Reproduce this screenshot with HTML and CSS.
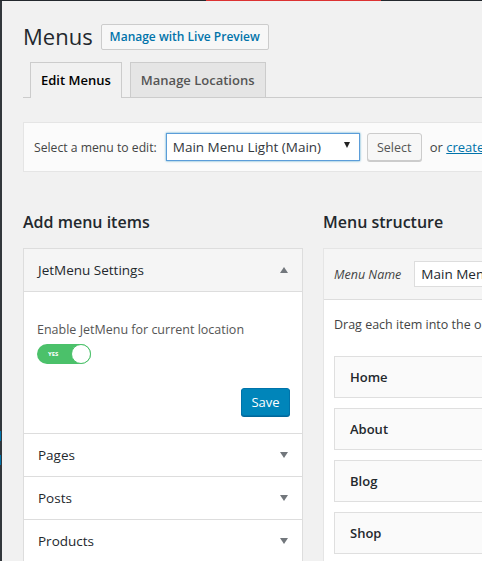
FILE: index.html
```html
<html>
<head>
    <meta charset="UTF-8">
    <title>Menus</title>
    <link rel="stylesheet" href="styles.css">
</head>
<body>
<div class="topbar"><span class="topbar-red"></span></div>
<div class="shell">
    <div class="sidebar">
        <span class="side-mark first"></span>
        <span class="side-mark"></span>
    </div>
    <div class="wrap">
        <div class="title-row">
            <h1>Menus</h1>
            <a class="page-title-action">Manage with Live Preview</a>
        </div>

        <div class="nav-tabs">
            <a class="nav-tab active">Edit Menus</a>
            <a class="nav-tab">Manage Locations</a>
        </div>

        <div class="manage-menus">
            <label>Select a menu to edit:</label>
            <div class="select-box">
                <span>Main Menu Light (Main)</span>
                <span class="caret"></span>
            </div>
            <button class="button">Select</button>
            <span class="or-text">or <a class="link">create a new menu</a>.</span>
        </div>

        <div class="columns">
            <div class="col-left">
                <h3>Add menu items</h3>
                <div class="accordion">
                    <div class="acc-title open">
                        JetMenu Settings
                        <span class="arrow up"></span>
                    </div>
                    <div class="acc-body">
                        <div class="opt-label">Enable JetMenu for current location</div>
                        <div class="toggle">
                            <span class="toggle-text">YES</span>
                            <span class="toggle-knob"></span>
                        </div>
                        <div class="save-row">
                            <button class="button-primary">Save</button>
                        </div>
                    </div>
                    <div class="acc-title">Pages <span class="arrow"></span></div>
                    <div class="acc-title">Posts <span class="arrow"></span></div>
                    <div class="acc-title">Products <span class="arrow"></span></div>
                </div>
            </div>

            <div class="col-right">
                <h3>Menu structure</h3>
                <div class="menu-edit">
                    <div class="menu-header">
                        <em class="menu-name-label">Menu Name</em>
                        <div class="menu-name-input">Main Menu Light</div>
                    </div>
                    <div class="menu-body">
                        <p class="drag-hint">Drag each item into the order you prefer.</p>
                        <div class="menu-item">Home</div>
                        <div class="menu-item">About</div>
                        <div class="menu-item">Blog</div>
                        <div class="menu-item">Shop</div>
                    </div>
                </div>
            </div>
        </div>
    </div>
</div>
</body>
</html>
```

FILE: styles.css
```css
body {
    margin: 0;
    padding: 0;
    background-color: #f1f1f1;
    font-family: "Open Sans", "Noto Sans", sans-serif;
    color: #23282d;
    overflow: hidden;
    width: 482px;
    height: 561px;
}

.topbar {
    height: 1px;
    background-color: #23282d;
    display: flex;
}

.topbar-red {
    margin-left: 206px;
    width: 175px;
    background-color: #dc3232;
}

.shell {
    display: flex;
}

.sidebar {
    width: 2px;
    flex-shrink: 0;
    background-color: #32373c;
    height: 560px;
    display: flex;
    flex-direction: column;
}

.side-mark {
    width: 1px;
    height: 10px;
    background-color: #0073aa;
    margin-top: 14px;
}

.side-mark.first {
    margin-top: 430px;
}

.wrap {
    width: 900px;
    flex-shrink: 0;
    padding-left: 21px;
}

/* heading */
.title-row {
    display: flex;
    align-items: center;
    margin-top: 22px;
    height: 27px;
}

h1 {
    font-size: 22px;
    font-weight: 400;
    margin: 0 8px 0 0;
    line-height: 29px;
}

.page-title-action {
    border: 1px solid #ccc;
    background-color: #f7f7f7;
    color: #0073aa;
    font-size: 12px;
    font-weight: 600;
    padding: 0 8px;
    height: 24px;
    line-height: 24px;
    border-radius: 2px;
}

/* tabs */
.nav-tabs {
    display: flex;
    margin-top: 12px;
    border-bottom: 1px solid #ccc;
    height: 35px;
    align-items: flex-end;
}

.nav-tab {
    margin-left: 7px;
    border: 1px solid #ccc;
    border-bottom: none;
    background-color: #e5e5e5;
    color: #555;
    font-size: 13px;
    font-weight: 600;
    height: 35px;
    line-height: 35px;
    padding: 0 10px;
    box-sizing: border-box;
}

.nav-tab.active {
    background-color: #f1f1f1;
    color: #000;
    height: 36px;
    margin-bottom: -1px;
}

.nav-tab + .nav-tab {
    margin-left: 8px;
}

/* select bar */
.manage-menus {
    margin-top: 24px;
    background-color: #fbfbfb;
    border: 1px solid #e5e5e5;
    height: 48px;
    display: flex;
    align-items: center;
    padding-left: 10px;
    font-size: 12.2px;
    color: #444;
}

.select-box {
    margin-left: 9px;
    width: 194px;
    height: 28px;
    box-sizing: border-box;
    border: 1px solid #5b9dd9;
    box-shadow: 0 0 2px rgba(30, 140, 190, 0.8);
    background-color: #fff;
    display: flex;
    align-items: center;
    justify-content: space-between;
    padding: 0 9px 0 6px;
    font-size: 13.5px;
    color: #32373c;
}

.caret {
    width: 0;
    height: 0;
    border-left: 3.5px solid transparent;
    border-right: 3.5px solid transparent;
    border-top: 6px solid #222;
    margin-bottom: 4px;
}

.button {
    margin-left: 7px;
    width: 55px;
    height: 28px;
    border: 1px solid #ccc;
    border-radius: 3px;
    background-color: #f7f7f7;
    box-shadow: 0 1px 0 #ccc;
    font-family: inherit;
    font-size: 12.5px;
    color: #555;
}

.or-text {
    margin-left: 8px;
    white-space: nowrap;
    font-size: 13px;
}

.link {
    color: #0073aa;
    text-decoration: underline;
}

/* columns */
.columns {
    display: flex;
    margin-top: 39px;
}

.col-left {
    width: 280px;
    margin-right: 20px;
    flex-shrink: 0;
}

.col-right {
    width: 560px;
}

h3 {
    font-size: 16px;
    font-weight: 600;
    margin: 0 0 15px 0;
    line-height: 22px;
    color: #23282d;
}

.accordion {
    border: 1px solid #ddd;
    background-color: #fff;
}

.acc-title {
    height: 43px;
    box-sizing: border-box;
    padding-left: 14px;
    padding-right: 14px;
    display: flex;
    align-items: center;
    justify-content: space-between;
    font-size: 13.5px;
    border-top: 1px solid #ddd;
    background-color: #fff;
}

.acc-title.open {
    border-top: none;
    background-color: #f5f5f5;
    border-bottom: 1px solid #ddd;
}

.arrow {
    width: 0;
    height: 0;
    border-left: 4.5px solid transparent;
    border-right: 4.5px solid transparent;
    border-top: 6px solid #72777c;
}

.arrow.up {
    border-top: none;
    border-bottom: 6px solid #72777c;
}

.acc-body {
    height: 141px;
    box-sizing: border-box;
    padding: 29px 12px 0 13px;
}

.opt-label {
    font-size: 12.5px;
    color: #555;
}

.toggle {
    margin-top: 6px;
    width: 54px;
    height: 20px;
    border-radius: 10px;
    background-color: #4bc16a;
    display: flex;
    align-items: center;
    justify-content: space-between;
    box-sizing: border-box;
    padding-left: 11px;
}

.toggle-text {
    color: #fff;
    font-size: 6px;
    font-weight: 700;
}

.toggle-knob {
    width: 20px;
    height: 20px;
    box-sizing: border-box;
    border-radius: 50%;
    background-color: #fff;
    border: 1px solid #4bc16a;
}

.save-row {
    display: flex;
    justify-content: flex-end;
    margin-top: 24px;
}

.button-primary {
    width: 49px;
    height: 28px;
    border: 1px solid #0073aa;
    border-radius: 3px;
    background-color: #0085ba;
    box-shadow: 0 1px 0 #006799;
    color: #fff;
    font-family: inherit;
    font-size: 13px;
}

.menu-edit {
    border: 1px solid #e5e5e5;
    background-color: #fff;
}

.menu-header {
    height: 51px;
    box-sizing: border-box;
    background-color: #f5f5f5;
    border-bottom: 1px solid #ddd;
    display: flex;
    align-items: center;
    padding-left: 10px;
}

.menu-name-label {
    font-size: 12.5px;
    color: #444;
    margin-right: 13px;
}

.menu-name-input {
    width: 300px;
    height: 26px;
    box-sizing: border-box;
    border: 1px solid #ddd;
    background-color: #fff;
    font-size: 13.5px;
    line-height: 24px;
    padding-left: 6px;
}

.menu-body {
    padding: 16px 10px;
}

.drag-hint {
    margin: 0 0 23px 0;
    font-size: 12.5px;
    color: #444;
    white-space: nowrap;
}

.menu-item {
    height: 42px;
    box-sizing: border-box;
    border: 1px solid #dfdfdf;
    background-color: #fafafa;
    margin-bottom: 10px;
    padding-left: 15px;
    display: flex;
    align-items: center;
    font-size: 13px;
    font-weight: 600;
    color: #23282d;
}
```
